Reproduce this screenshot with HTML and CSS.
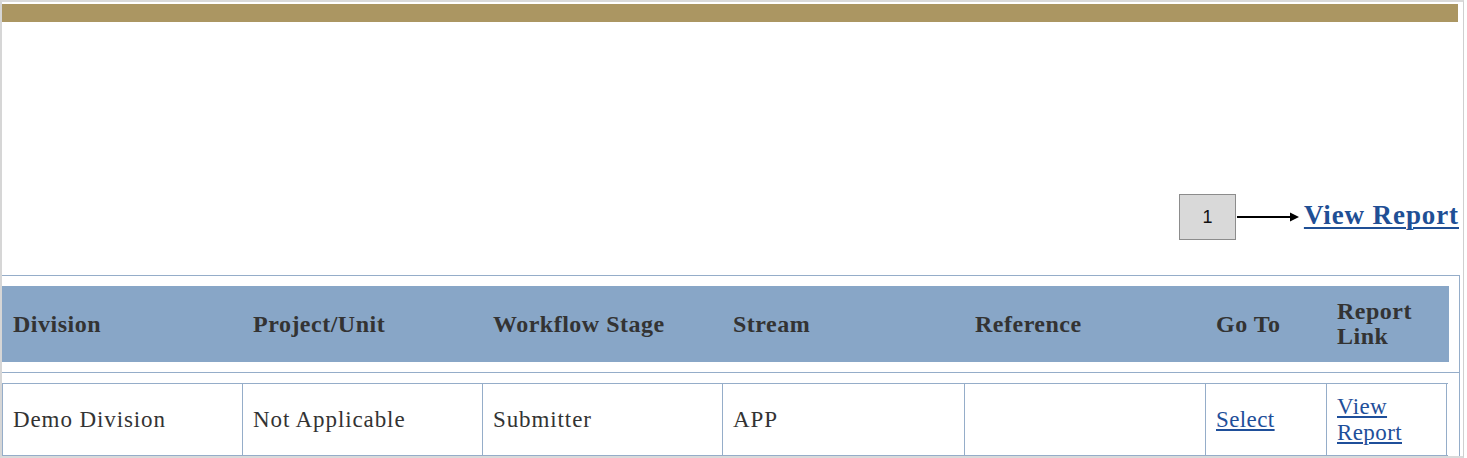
FILE: index.html
```html
<!DOCTYPE html>
<html lang="en">
<head>
<meta charset="utf-8">
<title>View Report</title>
<link rel="stylesheet" href="styles.css">
</head>
<body>
<div class="frame">
  <div class="band"></div>
  <div class="toolbar">
    <div class="callout">1</div>
    <svg class="arrow" width="63" height="12" viewBox="0 0 63 12" aria-hidden="true">
      <line x1="0" y1="6" x2="55" y2="6" stroke="#000" stroke-width="2"/>
      <polygon points="53,1.5 62,6 53,10.5" fill="#000"/>
    </svg>
    <a class="top-link" href="#">View Report</a>
  </div>
  <div class="tablebox">
    <div class="row head">
      <div class="cell">Division</div>
      <div class="cell">Project/Unit</div>
      <div class="cell">Workflow Stage</div>
      <div class="cell">Stream</div>
      <div class="cell">Reference</div>
      <div class="cell">Go To</div>
      <div class="cell">Report<br>Link</div>
    </div>
    <div class="sep"></div>
    <div class="row data">
      <div class="cell">Demo Division</div>
      <div class="cell">Not Applicable</div>
      <div class="cell">Submitter</div>
      <div class="cell">APP</div>
      <div class="cell"></div>
      <div class="cell"><a href="#">Select</a></div>
      <div class="cell last"><a href="#">View<br>Report</a></div>
    </div>
  </div>
</div>
</body>
</html>
```

FILE: styles.css
```css
html, body {
  margin: 0;
  padding: 0;
  background: #ffffff;
}

.frame {
  width: 1461px;
  height: 454px;
  border-top: 2px solid #dadada;
  border-left: 2px solid #d6d6d6;
  border-right: 1px solid #cfcfcf;
  border-bottom: 2px solid #dadada;
  overflow: hidden;
  font-family: "Liberation Serif", "Times New Roman", serif;
  color: #333333;
}

.band {
  margin-top: 2px;
  width: 1456px;
  height: 18px;
  background: #ab9662;
}

.toolbar {
  height: 253px;
  display: flex;
  justify-content: flex-end;
  align-items: flex-start;
  padding-right: 4px;
  box-sizing: border-box;
  padding-top: 172px;
}

.callout {
  width: 55px;
  height: 44px;
  border: 1px solid #8c8c8c;
  background: #d9d9d9;
  font-family: "Liberation Sans", Arial, sans-serif;
  font-size: 18px;
  color: #111;
  display: flex;
  align-items: center;
  justify-content: center;
}

.arrow {
  display: block;
  margin-top: 17px;
  margin-left: 1px;
}

.top-link {
  margin-left: 4px;
  margin-top: 6px;
  font-size: 27px;
  line-height: 30px;
  font-weight: bold;
  letter-spacing: 0.9px;
  color: #1f4f95;
  text-decoration: underline;
  text-decoration-thickness: 2px;
  text-underline-offset: 3px;
}

.tablebox {
  width: 1457px;
  border-top: 1px solid #95adc9;
  border-right: 1px solid #95adc9;
}

.row {
  display: grid;
  grid-template-columns: 240px 240px 240px 242px 241px 121px 121px;
  margin: 10px 10px 0 0;
}

.head {
  height: 76px;
  background: #88a6c7;
  width: 1447px;
  font-weight: bold;
  font-size: 24px;
  letter-spacing: 0.5px;
  color: #333333;
}

.head .cell {
  border-left: 1px solid transparent;
  padding-left: 10px;
  display: flex;
  align-items: center;
  line-height: 25px;
}

.sep {
  margin-top: 10px;
  border-top: 1px solid #95adc9;
}

.data {
  height: 73px;
  width: 1446px;
  box-sizing: border-box;
  border-top: 1px solid #95adc9;
  border-bottom: 1px solid #95adc9;
  font-size: 23px;
  letter-spacing: 0.9px;
}

.data .cell {
  border-left: 1px solid #95adc9;
  padding-left: 10px;
  display: flex;
  align-items: center;
  line-height: 26px;
}

.data .cell.last {
  border-right: 1px solid #95adc9;
}

.data a {
  color: #1f4f9a;
  text-decoration: underline;
  letter-spacing: 0.4px;
}
```
